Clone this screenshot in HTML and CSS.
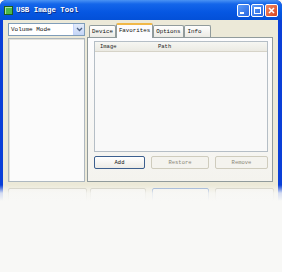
FILE: index.html
```html
<!DOCTYPE html>
<html lang="en">
<head>
    <meta charset="UTF-8">
    <title>USB Image Tool</title>
    <link rel="stylesheet" href="styles.css">
</head>
<body>
    <div class="window">
        <div class="titlebar">
            <span class="app-icon"></span>
            <span class="title">USB Image Tool</span>
            <div class="caption-btns">
                <span class="cap-btn"><span class="min-glyph"></span></span>
                <span class="cap-btn"><span class="max-glyph"></span></span>
                <span class="cap-btn close">
                    <svg width="7" height="7" viewBox="0 0 7 7"><path d="M1 1 L6 6 M6 1 L1 6" stroke="#fff" stroke-width="1.6"/></svg>
                </span>
            </div>
        </div>

        <div class="client">
            <div class="main">
                <div class="side">
                    <div class="combo">
                        <span class="combo-text">Volume Mode</span>
                        <span class="combo-arrow">
                            <svg width="7" height="5" viewBox="0 0 7 5"><path d="M1 1 L3.5 3.5 L6 1" fill="none" stroke="#4d6185" stroke-width="1.3"/></svg>
                        </span>
                    </div>
                    <div class="listbox"></div>
                </div>

                <div class="tabctl">
                    <div class="tabs">
                        <span class="tab">Device</span>
                        <span class="tab active">Favorites</span>
                        <span class="tab">Options</span>
                        <span class="tab tab-info">Info</span>
                    </div>
                    <div class="panel">
                        <div class="listview">
                            <div class="lv-head">
                                <span class="col-image">Image</span>
                                <span class="col-path">Path</span>
                            </div>
                        </div>
                        <div class="btn-row">
                            <span class="btn btn-add">Add</span>
                            <span class="btn btn-restore disabled">Restore</span>
                            <span class="btn btn-remove disabled">Remove</span>
                        </div>
                    </div>
                </div>
            </div>

            <div class="bottom-row">
                <span class="bot-box b1"></span>
                <span class="bot-box b2"></span>
                <span class="bot-box b3"></span>
                <span class="bot-box b4"></span>
            </div>
        </div>
    </div>
    <div class="fade"></div>
</body>
</html>
```

FILE: styles.css
```css
body {
    margin: 0;
    background: #f8f8f6;
    font-family: "Liberation Mono", monospace;
    width: 282px;
    height: 272px;
    overflow: hidden;
    position: relative;
}

.window {
    width: 282px;
    height: 210px;
    background: #0a3fd8;
    border-radius: 6px 6px 0 0;
    overflow: hidden;
    padding: 0 4px 0 3px;
    box-sizing: border-box;
}

.titlebar {
    height: 20px;
    margin: 0 -4px 0 -3px;
    padding: 0 4px 0 4px;
    display: flex;
    align-items: center;
    background: linear-gradient(#4a93f4 0%, #1466ea 20%, #0657e2 60%, #0350d8 100%);
    border-radius: 6px 6px 0 0;
}

.app-icon {
    width: 7px;
    height: 7px;
    background: #4cb84a;
    border: 1px solid #1d5e1c;
    box-shadow: inset 1px 1px 0 #a8e49a;
    margin-right: 3px;
}

.title {
    color: #fff;
    font-family: "Liberation Mono", monospace;
    font-weight: bold;
    font-size: 7.4px;
    text-shadow: 1px 1px 0 #0a2f8a;
}

.caption-btns {
    margin-left: auto;
    display: flex;
    gap: 1px;
}

.cap-btn {
    width: 11px;
    height: 11px;
    border: 1px solid #fff;
    border-radius: 2px;
    background: linear-gradient(135deg, #5e9cf8, #2665e0);
    display: flex;
    align-items: center;
    justify-content: center;
    position: relative;
}

.cap-btn.close {
    background: linear-gradient(135deg, #f08a66, #d8461e);
}

.min-glyph {
    width: 4px;
    height: 2px;
    background: #fff;
    position: absolute;
    left: 2px;
    bottom: 2px;
}

.max-glyph {
    width: 5px;
    height: 4px;
    border: 1px solid #fff;
    border-top-width: 2px;
}

.client {
    background: #ece9d8;
    height: 190px;
    padding: 3px 4px 0 5px;
    box-sizing: border-box;
}

.main {
    display: flex;
    gap: 2px;
    height: 159px;
}

.side {
    width: 80px;
    display: flex;
    flex-direction: column;
    gap: 2px;
}

.combo {
    height: 13px;
    background: #fff;
    border: 1px solid #7f9db9;
    box-sizing: border-box;
    display: flex;
    align-items: center;
    padding-left: 2px;
}

.combo-text {
    font-size: 6px;
    color: #111;
    flex: 1;
}

.combo-arrow {
    width: 10px;
    height: 11px;
    background: linear-gradient(#e3ebfb, #c4d5f6);
    border-left: 1px solid #c3d3fd;
    display: flex;
    align-items: center;
    justify-content: center;
}

.listbox {
    flex: 1;
    background: #fbfbfb;
    border: 1px solid #aeb8c0;
    box-shadow: inset 1px 1px 0 #e2e0d8;
}

.tabctl {
    flex: 1;
    display: flex;
    flex-direction: column;
    margin-right: 1px;
}

.tabs {
    display: flex;
    align-items: flex-end;
    height: 14px;
    padding-left: 2px;
}

.tab {
    font-size: 5.8px;
    color: #111;
    height: 11px;
    line-height: 11px;
    padding: 0 2px;
    background: linear-gradient(#fefefe, #ecebe5);
    border: 1px solid #919b9c;
    border-bottom: none;
    border-radius: 2px 2px 0 0;
}

.tab.active {
    height: 13px;
    line-height: 12px;
    background: #fcfcfe;
    border-top: 2px solid #f0b848;
    margin-bottom: -1px;
    position: relative;
}

.tab-info {
    padding: 0 9px 0 3px;
}

.panel {
    flex: 1;
    background: linear-gradient(#fcfcfe, #f4f3ee);
    border: 1px solid #919b9c;
    padding: 3px 4px 0 6px;
    display: flex;
    flex-direction: column;
}

.listview {
    height: 109px;
    background: #f9f9f9;
    border: 1px solid #b5bec6;
}

.lv-head {
    height: 9px;
    display: flex;
    align-items: center;
    background: linear-gradient(#f6f6f2, #ebeae3);
    border-bottom: 1px solid #d6d3c8;
    font-size: 5.5px;
    color: #222;
}

.col-image {
    padding-left: 5px;
    width: 58px;
}

.btn-row {
    display: flex;
    gap: 6px;
    margin-top: 4px;
}

.btn {
    height: 13px;
    box-sizing: border-box;
    font-size: 5.5px;
    color: #111;
    display: flex;
    align-items: center;
    justify-content: center;
    border: 1px solid #3c5f8e;
    border-radius: 2px;
    background: linear-gradient(#fff, #ecebe6);
}

.btn.disabled {
    color: #8a8777;
    border-color: #cfccbd;
    background: #f4f3ee;
}

.btn-add {
    width: 51px;
}

.btn-restore {
    width: 58px;
}

.btn-remove {
    width: 53px;
}

.bottom-row {
    display: flex;
    margin-top: 6px;
    gap: 3px;
}

.bot-box {
    height: 14px;
    border: 1px solid #c5c2b2;
    border-radius: 2px;
    box-sizing: border-box;
    background: #f4f3ee;
}

.b1 {
    width: 80px;
}

.b2 {
    width: 57px;
}

.b3 {
    width: 58px;
    border-color: #7d9bc9;
    margin-left: 3px;
}

.b4 {
    width: 60px;
    margin-left: 3px;
}

.fade {
    position: absolute;
    left: 0;
    top: 185px;
    width: 282px;
    height: 87px;
    background: linear-gradient(rgba(248, 248, 246, 0) 0px, rgba(248, 248, 246, 0.85) 8px, #f8f8f6 16px);
}
```
